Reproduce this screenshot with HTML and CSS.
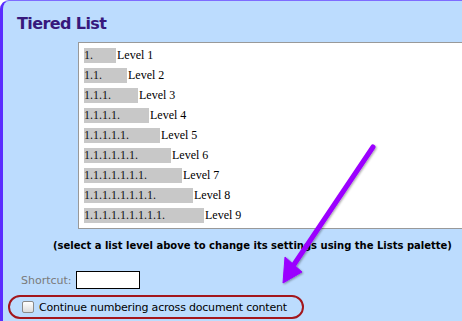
FILE: index.html
```html
<!DOCTYPE html>
<html lang="en">
<head>
    <meta charset="UTF-8">
    <title>Tiered List</title>
    <link rel="stylesheet" href="styles.css">
</head>
<body>
    <div class="panel">
        <h1 class="title">Tiered List</h1>

        <div class="levels">
            <div class="level"><span class="num" style="width: 32px">1.</span><span class="name">Level 1</span></div>
            <div class="level"><span class="num" style="width: 43px">1.1.</span><span class="name">Level 2</span></div>
            <div class="level"><span class="num" style="width: 54px">1.1.1.</span><span class="name">Level 3</span></div>
            <div class="level"><span class="num" style="width: 65px">1.1.1.1.</span><span class="name">Level 4</span></div>
            <div class="level"><span class="num" style="width: 76px">1.1.1.1.1.</span><span class="name">Level 5</span></div>
            <div class="level"><span class="num" style="width: 87px">1.1.1.1.1.1.</span><span class="name">Level 6</span></div>
            <div class="level"><span class="num" style="width: 98px">1.1.1.1.1.1.1.</span><span class="name">Level 7</span></div>
            <div class="level"><span class="num" style="width: 109px">1.1.1.1.1.1.1.1.</span><span class="name">Level 8</span></div>
            <div class="level"><span class="num" style="width: 120px">1.1.1.1.1.1.1.1.1.</span><span class="name">Level 9</span></div>
        </div>

        <p class="hint">(select a list level above to change its settings using the Lists palette)</p>

        <div class="shortcut">
            <span class="shortcut-label">Shortcut:</span>
            <span class="shortcut-box"></span>
        </div>

        <div class="continue">
            <span class="checkbox"></span>
            <span>Continue numbering across document content</span>
        </div>

        <!-- callout arrow drawn over the panel -->
        <svg class="arrow" width="462" height="321" viewBox="0 0 462 321">
            <defs>
                <filter id="shade" x="-20%" y="-20%" width="140%" height="140%">
                    <feDropShadow dx="1" dy="1" stdDeviation="1" flood-color="#000" flood-opacity="0.35"/>
                </filter>
            </defs>
            <g filter="url(#shade)" fill="#9b00ff" stroke="#9b00ff">
                <line x1="373" y1="147" x2="293" y2="266" stroke-width="5" stroke-linecap="round"/>
                <polygon points="283,283 285,257 302,272" stroke-width="1" stroke-linejoin="round"/>
            </g>
        </svg>
    </div>
</body>
</html>
```

FILE: styles.css
```css
body {
    margin: 0;
    background-color: #fff;
    font-family: "DejaVu Sans", Verdana, sans-serif;
}
.panel {
    position: relative;
    height: 321px;
    box-sizing: border-box;
    overflow: hidden;
    background-color: #bcdcfe;
    border-left: 3px solid #5a2cff;
    border-top: 1px solid #7e6cff;
    border-top-left-radius: 9px;
}
.title {
    margin: 0;
    padding: 13px 0 0 14px;
    height: 28px;
    font-size: 16px;
    letter-spacing: -0.6px;
    font-weight: bold;
    color: #37197c;
}
.levels {
    margin-left: 75px;
    margin-right: -20px;
    height: 187px;
    box-sizing: border-box;
    padding: 5px 0 0 5px;
    background-color: #fff;
    border: 1px solid #999;
    font-family: "Liberation Serif", "Times New Roman", serif;
    font-size: 12px;
    color: #000;
}
.level {
    display: flex;
    align-items: center;
    height: 15px;
    margin-bottom: 5px;
}
.num {
    height: 15px;
    line-height: 15px;
    background-color: #c8c8c8;
    color: #111;
    flex-shrink: 0;
}
.name {
    padding-left: 1px;
}
.hint {
    margin: 11px 0 0 50px;
    height: 14px;
    font-size: 10px;
    font-weight: bold;
    color: #000;
    white-space: nowrap;
}
.shortcut {
    display: flex;
    align-items: center;
    gap: 4px;
    margin: 17px 0 0 18px;
    height: 18px;
}
.shortcut-label {
    font-size: 11px;
    color: #7a7a7a;
}
.shortcut-box {
    width: 62px;
    height: 16px;
    background-color: #fff;
    border: 1px solid #000;
}
.continue {
    display: flex;
    align-items: center;
    gap: 5px;
    margin: 6px 0 0 5px;
    width: 296px;
    height: 24px;
    box-sizing: border-box;
    padding-left: 12px;
    border: 2px solid #a3161c;
    border-radius: 12px;
    font-size: 11px;
    letter-spacing: -0.2px;
    color: #000;
}
.checkbox {
    width: 10px;
    height: 10px;
    border: 1px solid #8a8a8a;
    border-radius: 2px;
    background: linear-gradient(#fff, #dcdcdc);
}
.arrow {
    position: absolute;
    left: -3px;
    top: -1px;
    pointer-events: none;
}
```
